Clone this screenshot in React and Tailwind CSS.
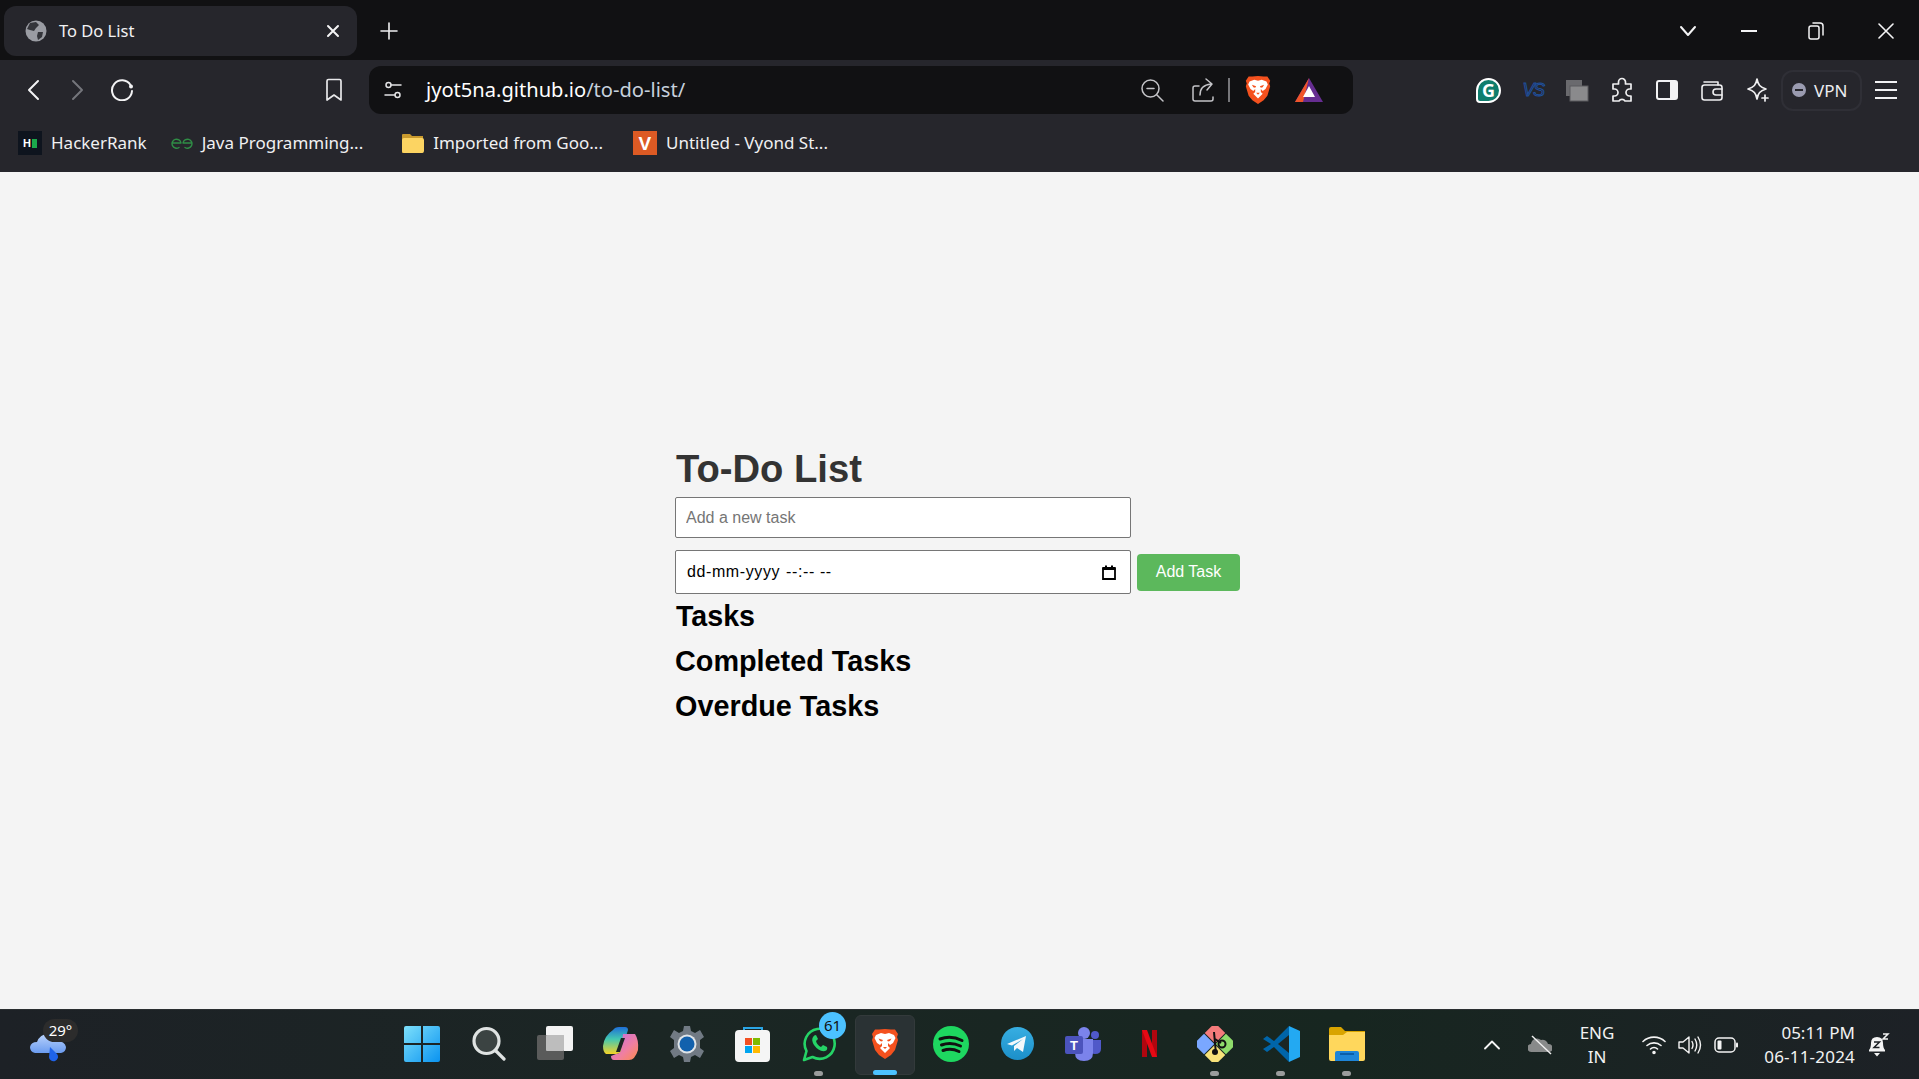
import React from "react";

const Brave = ({ s = 30 }) => (
  <svg width={s} height={s} viewBox="0 0 32 32">
    <path d="M16 1 L10 1.5 L6 1.5 L3 6 L4 9 L3 12 L6 22 L10 27 L16 31 L22 27 L26 22 L29 12 L28 9 L29 6 L26 1.5 L22 1.5 Z" fill="#f4511e" />
    <path d="M16 6 L20 5 L25 7 L26.5 10 L24 15 L21 17 L19 15 L19 18 L21 20 L16 25 L11 20 L13 18 L13 15 L11 17 L8 15 L5.5 10 L7 7 L12 5 Z" fill="#fff" />
    <path d="M9.5 10.5 L14 12 L13 13.5 L11 13 Z M22.5 10.5 L18 12 L19 13.5 L21 13 Z M14 19 L18 19 L16 21 Z" fill="#f4511e" />
  </svg>
);

const Stroke = ({ w = 24, h = 24, vb = "0 0 24 24", sw = 2, c = "#e8e8ea", children }) => (
  <svg width={w} height={h} viewBox={vb} fill="none" stroke={c} strokeWidth={sw} strokeLinecap="round" strokeLinejoin="round">
    {children}
  </svg>
);

const Cell = ({ w, children, className = "" }) => (
  <div className={`flex h-full shrink-0 items-center justify-center ${className}`} style={{ width: w }}>
    {children}
  </div>
);

function TabStrip() {
  return (
    <div className="flex h-[60px] shrink-0 items-start bg-[#111113] pl-[4px] pt-[6px]">
      <div className="flex h-[50px] w-[353px] items-center rounded-[12px] bg-[#26262c] pl-[21px]">
        <svg width="22" height="22" viewBox="0 0 22 22" className="shrink-0">
          <circle cx="11" cy="11" r="10.5" fill="#9a9ca3" />
          <path d="M5 3 L11 2 L14 5 L11 8 L9 11 L5 10 L2 9 Z M13 12 L18 12 L17 17 L13 20 L12 16 Z" fill="#34353b" />
        </svg>
        <span className="ml-[12px] text-[16.5px] leading-none text-[#f2f2f4]">To Do List</span>
        <span className="ml-auto mr-[16px] flex">
          <Stroke w={16} h={16} vb="0 0 16 16" sw={2} c="#f4f4f5"><path d="M3 3 L13 13 M13 3 L3 13" /></Stroke>
        </span>
      </div>
      <div className="ml-[23px] flex h-[50px] items-center">
        <Stroke w={18} h={18} vb="0 0 18 18" sw={1.6} c="#f0f0f2"><path d="M9 1 V17 M1 9 H17" /></Stroke>
      </div>
      <div className="ml-auto flex h-[50px] items-center">
        <Cell w={20}><Stroke w={18} h={12} vb="0 0 18 12" sw={2} c="#f4f4f5"><path d="M2 2 L9 10 L16 2" /></Stroke></Cell>
        <Cell w={40} className="ml-[31px]"><div className="h-[2px] w-[16px] bg-[#f4f4f5]" /></Cell>
        <Cell w={40} className="ml-[27px]">
          <Stroke w={16} h={18} vb="0 0 16 18" sw={1.5} c="#f4f4f5"><rect x="1" y="4" width="10" height="13" rx="2" /><path d="M5 1 H12 Q15 1 15 4 V13" /></Stroke>
        </Cell>
        <Cell w={40} className="ml-[30px] mr-[13px]"><Stroke w={16} h={16} vb="0 0 16 16" sw={1.6} c="#f4f4f5"><path d="M1 1 L15 15 M15 1 L1 15" /></Stroke></Cell>
      </div>
    </div>
  );
}

function Toolbar() {
  return (
    <div className="flex h-[68px] shrink-0 items-start bg-[#26262c] pt-[6px]">
      <div className="flex h-[48px] items-center pl-[11px]">
        <Cell w={44}><Stroke w={14} h={22} vb="0 0 14 22" sw={2} c="#f2f2f4"><path d="M12 2 L3 11 L12 20" /></Stroke></Cell>
        <Cell w={45}><Stroke w={14} h={22} vb="0 0 14 22" sw={2} c="#74757b"><path d="M2 2 L11 11 L2 20" /></Stroke></Cell>
        <Cell w={44}>
          <svg width="24" height="24" viewBox="0 0 24 24" fill="none" stroke="#f2f2f4" strokeWidth="2" strokeLinecap="round" className="-mt-[2px]">
            <path d="M20.5 8 A10 10 0 1 0 22 14" />
            <circle cx="21" cy="9.5" r="2" fill="#f2f2f4" stroke="none" />
          </svg>
        </Cell>
        <Cell w={44} className="ml-[168px]">
          <Stroke w={18} h={24} vb="0 0 18 24" sw={1.7} c="#e8e8ea"><path d="M2 3 Q2 1.5 3.5 1.5 H14.5 Q16 1.5 16 3 V22 L9 17 L2 22 Z" /></Stroke>
        </Cell>
      </div>
      <div className="ml-[13px] flex h-[48px] w-[984px] items-center rounded-[12px] bg-[#111113]">
        <span className="ml-[14px] flex">
          <Stroke w={20} h={20} vb="0 0 20 20" sw={1.5} c="#e4e4e6">
            <circle cx="5.5" cy="5" r="2.5" /><path d="M8 5 H18 M2 15 H12" /><circle cx="14.5" cy="15" r="2.5" />
          </Stroke>
        </span>
        <span className="ml-[23px] text-[20.1px] leading-none">
          <span className="text-[#ffffff]">jyot5na.github.io</span>
          <span className="text-[#c6d0dc]">/to-do-list/</span>
        </span>
        <div className="ml-auto flex h-full items-center pr-[30px]">
          <Stroke w={24} h={24} sw={1.5} c="#c4c4c8"><circle cx="10.5" cy="10.5" r="8.5" /><path d="M17 17 L23 23" /><path d="M7 10.5 H14" /></Stroke>
          <span className="ml-[27px] flex">
            <Stroke w={24} h={26} vb="0 0 24 26" sw={1.5} c="#c4c4c8"><path d="M8 9 H4 Q2 9 2 11 V22 Q2 24 4 24 H20 Q22 24 22 22 V20" /><path d="M9 18 Q9 8 20 7 M15 2 L21 7 L16 13" /></Stroke>
          </span>
          <div className="ml-[13px] h-[24px] w-[2px] bg-[#77777b]" />
          <span className="ml-[13px] flex"><Brave s={30} /></span>
          <svg width="28" height="24" viewBox="0 0 28 24" className="ml-[22px]">
            <path d="M14 0 L28 24 H0 Z" fill="#662d91" />
            <path d="M14 0 L0 24 H8 Z" fill="#f0542a" />
            <path d="M14 8 L20 19 H8 Z" fill="#fff" />
          </svg>
        </div>
      </div>
      <div className="flex h-[48px] items-center">
        <span className="ml-[123px] flex h-[25px] w-[25px] items-center justify-center rounded-[50%_50%_50%_4px] border-2 border-white bg-[#0f7d6d] text-[18px] font-bold leading-none text-white">G</span>
        <span className="ml-[20px] w-[24px] text-center font-['Liberation_Sans',sans-serif] text-[18px] italic leading-none tracking-[-1.5px] text-transparent [-webkit-text-stroke:1px_#1f4f9c]">VS</span>
        <svg width="24" height="24" viewBox="0 0 24 24" className="ml-[20px]">
          <rect x="1" y="2" width="16" height="16" fill="#6a6a6e" />
          <rect x="5" y="8" width="18" height="15" fill="#8a8a8c" stroke="#5a5a5e" />
        </svg>
        <span className="ml-[21px] flex">
          <Stroke w={24} h={26} vb="0 0 24 26" sw={1.7} c="#efeff1"><path d="M8.5 5 A3.5 3.5 0 0 1 15.5 5 L15.5 7 H21 V12 H19.5 A3.5 3.5 0 0 0 19.5 19 H21 V24 H15 A3.5 3.5 0 0 0 9 24 H3 V19 H4.5 A3.5 3.5 0 0 0 4.5 12 H3 V7 H8.5 Z" /></Stroke>
        </span>
        <svg width="24" height="24" viewBox="0 0 24 24" className="ml-[21px]">
          <rect x="2" y="3" width="20" height="18" rx="2" fill="none" stroke="#f2f2f4" strokeWidth="2" />
          <rect x="15" y="3" width="7" height="18" fill="#f2f2f4" />
        </svg>
        <span className="ml-[21px] flex">
          <Stroke w={24} h={24} sw={1.6} c="#efeff1"><path d="M4 4 H18 V7" /><rect x="2" y="7" width="20" height="15" rx="2.5" /><path d="M22 11 H16 A2.5 2.5 0 0 0 16 17 H22" /></Stroke>
        </span>
        <span className="ml-[21px] flex">
          <Stroke w={24} h={26} vb="0 0 24 26" sw={1.7} c="#efeff1"><path d="M12 2 C13 8 15 10 21 12 C15 14 13 16 12 22 C11 16 9 14 3 12 C9 10 11 8 12 2 Z" /><path d="M20 18 V24 M17 21 H23" /></Stroke>
        </span>
        <div className="ml-[12px] flex h-[41px] w-[81px] items-center rounded-[12px] border-2 border-[#2f2f36] pl-[9px]">
          <span className="flex h-[14px] w-[14px] items-center justify-center rounded-full bg-[#9a9bb0]"><span className="h-[2px] w-[8px] bg-[#26262c]" /></span>
          <span className="ml-[8px] text-[17px] leading-none text-[#ededf0]">VPN</span>
        </div>
        <div className="ml-[13px] flex w-[22px] flex-col gap-[6px]">
          <div className="h-[2px] bg-[#f2f2f4]" /><div className="h-[2px] bg-[#f2f2f4]" /><div className="h-[2px] bg-[#f2f2f4]" />
        </div>
      </div>
    </div>
  );
}

const Bookmark = ({ icon, label, ml }) => (
  <div className="flex h-[24px] items-center" style={{ marginLeft: ml }}>
    {icon}
    <span className="-mt-[2px] ml-[9px] whitespace-nowrap text-[17px] leading-none text-[#f0f0f2]">{label}</span>
  </div>
);

function Bookmarks() {
  return (
    <div className="flex h-[44px] shrink-0 items-start bg-[#26262c] pl-[18px] pt-[3px]">
      <Bookmark ml={0} label="HackerRank" icon={
        <span className="flex h-[24px] w-[24px] items-center justify-center gap-[1px] bg-[#0e141e]">
          <span className="font-['Liberation_Sans',sans-serif] text-[11px] font-bold leading-none text-white">H</span>
          <span className="h-[9px] w-[5px] bg-[#1ba94c]" />
        </span>} />
      <Bookmark ml={24} label="Java Programming..." icon={
        <Stroke w={22} h={14} vb="0 0 22 14" sw={1.4} c="#2f8d46">
          <path d="M1 7 H10 A4.5 4.5 0 1 0 8 11.5 M21 7 H12 A4.5 4.5 0 1 1 14 11.5" />
        </Stroke>} />
      <Bookmark ml={38} label="Imported from Goo..." icon={
        <svg width="23" height="24" viewBox="0 0 23 24">
          <path d="M1 4 Q1 3 2 3 H9 L11 5 H22 V21 Q22 22 21 22 H2 Q1 22 1 21 Z" fill="#c99a2e" />
          <rect x="1" y="7" width="22" height="15" rx="2" fill="#fcd462" />
        </svg>} />
      <Bookmark ml={30} label="Untitled - Vyond St..." icon={
        <span className="flex h-[24px] w-[24px] items-center justify-center bg-[#dc5a24] font-['Liberation_Sans',sans-serif] text-[19px] font-bold leading-none text-white">V</span>} />
    </div>
  );
}

function Page() {
  return (
    <main className="flex min-h-0 flex-1 flex-col bg-[#f4f4f4] pl-[675px] pt-[275px] font-['Liberation_Sans',Arial,sans-serif]">
      <h1 className="pl-[1px] text-[38.2px] font-bold leading-[43px] text-[#333333]">To-Do List</h1>
      <input
        readOnly
        placeholder="Add a new task"
        className="mt-[7px] h-[41px] w-[456px] rounded-[2px] border border-[#767676] bg-white px-[10px] text-[16px] outline-none placeholder:text-[#757575]"
      />
      <div className="mt-[12px] flex items-center gap-[6px]">
        <div className="flex h-[44px] w-[456px] items-center rounded-[2px] border border-[#767676] bg-white pl-[11px] pr-[14px] text-[16px] text-black">
          <span className="tracking-[0.6px]">dd-mm-yyyy</span>
          <span className="ml-[6px] tracking-[0.6px]">--:-- --</span>
          <svg width="14" height="15" viewBox="0 0 14 15" className="ml-auto">
            <path d="M1 3.5 H13 V14 H1 Z" fill="none" stroke="#000" strokeWidth="1.8" />
            <rect x="0.5" y="2" width="13" height="3" fill="#000" />
            <rect x="3" y="0.5" width="2" height="3" fill="#000" />
            <rect x="9" y="0.5" width="2" height="3" fill="#000" />
          </svg>
        </div>
        <button className="h-[37px] w-[103px] rounded-[4px] bg-[#5cb85c] text-[16px] text-white">Add Task</button>
      </div>
      <h2 className="mt-[6px] pl-[1px] text-[28.6px] font-bold leading-[32px] text-black">Tasks</h2>
      <h2 className="mt-[13px] text-[28.8px] font-bold leading-[32px] text-black">Completed Tasks</h2>
      <h2 className="mt-[13px] text-[28.8px] font-bold leading-[32px] text-black">Overdue Tasks</h2>
    </main>
  );
}

const Slot = ({ children, dot, active }) => (
  <div className="relative flex h-full w-[66px] shrink-0 items-center justify-center pb-[2px]">
    {active && <div className="absolute left-[3px] top-[5px] h-[60px] w-[60px] rounded-[6px] border border-[#333a3b] bg-[#2a3234]" />}
    <div className="relative flex">{children}</div>
    {dot && <div className="absolute bottom-[3px] left-[28px] h-[5px] w-[9px] rounded-full bg-[#9a9c9c]" />}
    {active && <div className="absolute bottom-[4px] left-[21px] h-[5px] w-[24px] rounded-full bg-[#4cc2ff]" />}
  </div>
);

function Taskbar() {
  return (
    <footer className="flex h-[70px] shrink-0 items-center border-t border-[#2a2e30] bg-[linear-gradient(90deg,#1d2126_0%,#1b2624_35%,#172620_70%,#1d2126_100%)] font-['Noto_Sans',sans-serif] text-[#f2f2f2]">
      <div className="relative h-full w-[390px] shrink-0">
        <svg width="36" height="29" viewBox="0 0 36 29" className="absolute left-[30px] top-[23px]">
          <defs>
            <linearGradient id="cl" x1="0" y1="0" x2="0" y2="1"><stop offset="0" stopColor="#b9d2fb" /><stop offset="1" stopColor="#6b9cf0" /></linearGradient>
          </defs>
          <path d="M5 20 Q0 19 0 14 Q1 9 7 9 Q10 1 18 1 Q24 2 26 8 Q35 8 36 14 Q36 19 31 20 Z" fill="url(#cl)" />
          <path d="M20 14 L27 21 A4.5 4.5 0 1 1 19 24 Z" fill="#1f63ea" />
        </svg>
        <span className="absolute left-[43px] top-[9px] flex h-[23px] w-[35px] items-center justify-center rounded-full bg-[#2c2c2c] text-[15px] leading-none text-white">29°</span>
      </div>

      <Slot>
        <svg width="36" height="36" viewBox="0 0 36 36" className="-ml-[3px]">
          <defs><linearGradient id="w" x1="0" y1="0" x2="1" y2="1"><stop offset="0" stopColor="#7de0fb" /><stop offset="1" stopColor="#0a93f0" /></linearGradient></defs>
          <path d="M0 2 Q0 0 2 0 H17 V17 H0 Z M19 0 H34 Q36 0 36 2 V17 H19 Z M0 19 H17 V36 H2 Q0 36 0 34 Z M19 19 H36 V34 Q36 36 34 36 H19 Z" fill="url(#w)" />
        </svg>
      </Slot>
      <Slot>
        <Stroke w={34} h={36} vb="0 0 34 36" sw={3.2} c="#dfe3e2"><circle cx="14.5" cy="15" r="12.5" fill="#3b4342" /><path d="M24 25 L32 33" /></Stroke>
      </Slot>
      <Slot>
        <svg width="36" height="36" viewBox="0 0 36 36">
          <rect x="9" y="0" width="27" height="25" rx="2" fill="#f3f3f3" />
          <rect x="0" y="9" width="27" height="25" rx="2" fill="#5f6060" fillOpacity="0.92" />
          <rect x="9" y="9" width="18" height="16" rx="1" fill="#bdbdbd" />
        </svg>
      </Slot>
      <Slot>
        <svg width="36" height="36" viewBox="0 0 36 36">
          <defs>
            <linearGradient id="c1" x1="0" y1="0" x2="0" y2="1"><stop offset="0" stopColor="#1f6fd8" /><stop offset="0.45" stopColor="#43c8b0" /><stop offset="1" stopColor="#f5d327" /></linearGradient>
            <linearGradient id="c2" x1="0" y1="0" x2="1" y2="1"><stop offset="0" stopColor="#c16be8" /><stop offset="0.6" stopColor="#f07fa0" /><stop offset="1" stopColor="#fb8b4a" /></linearGradient>
          </defs>
          <path d="M10 4 Q12 1 16 1 H22 Q25 1 25 4 L18 26 Q16 28 13 28 L3 28 Q0 26 0 20 Q1 10 10 4 Z" fill="url(#c1)" />
          <path d="M20 8 H32 Q36 14 35 24 Q32 34 26 34 H11 Q8 34 8 30 L13 28 Q17 28 18 24 Z" fill="url(#c2)" />
          <path d="M18 12 L22 12 L17 26 L13 26 Z" fill="#1b2624" />
        </svg>
      </Slot>
      <Slot>
        <svg width="36" height="36" viewBox="0 0 36 36">
          <path d="M15 0 H21 L22 5 L26 7 L31 4 L35 11 L31 14 V22 L35 25 L31 32 L26 29 L22 31 L21 36 H15 L14 31 L10 29 L5 32 L1 25 L5 22 V14 L1 11 L5 4 L10 7 L14 5 Z" fill="#717a84" />
          <circle cx="18" cy="18" r="9.5" fill="#dfe4e8" />
          <circle cx="18" cy="18" r="7.5" fill="#1261ad" />
        </svg>
      </Slot>
      <Slot>
        <svg width="36" height="36" viewBox="0 0 36 36">
          <path d="M9 8 V2 H27 V8" fill="none" stroke="#2aa5e5" strokeWidth="2" />
          <rect x="0" y="4" width="35" height="32" rx="4" fill="#f5f5f5" />
          <rect x="10" y="12" width="7" height="7" fill="#f25022" />
          <rect x="18" y="12" width="7" height="7" fill="#7fba00" />
          <rect x="10" y="20" width="7" height="7" fill="#00a4ef" />
          <rect x="18" y="20" width="7" height="7" fill="#ffb900" />
        </svg>
      </Slot>
      <Slot dot>
        <svg width="36" height="36" viewBox="0 0 36 36" fill="none">
          <path d="M3 34 L5.5 25 A15 15 0 1 1 11.5 31 Z" stroke="#25d366" strokeWidth="2.6" strokeLinejoin="round" />
          <path d="M12 11 Q10 14 13 19 Q18 26 24 25 Q27 24 26 21 L22 19 L20 21 Q16 19 15 15 L17 13 L15 9 Q13 9 12 11 Z" fill="#25d366" />
        </svg>
        <span className="absolute left-[18px] top-[-14px] flex h-[27px] w-[27px] items-center justify-center rounded-full bg-[#4cc2ff] text-[15px] leading-none text-[#111]">61</span>
      </Slot>
      <Slot active>
        <Brave s={32} />
      </Slot>
      <Slot>
        <svg width="36" height="36" viewBox="0 0 36 36" fill="none">
          <circle cx="18" cy="18" r="18" fill="#1ed760" />
          <path d="M7 13 Q18 9 29 14.5 M8.5 19 Q18 15.5 27.5 20 M10 24.5 Q18 21.5 26 25.5" stroke="#111" strokeWidth="3" strokeLinecap="round" />
        </svg>
      </Slot>
      <Slot>
        <svg width="33" height="33" viewBox="0 0 33 33">
          <defs><linearGradient id="t" x1="0" y1="0" x2="0" y2="1"><stop offset="0" stopColor="#37aee2" /><stop offset="1" stopColor="#1c8fc9" /></linearGradient></defs>
          <circle cx="16.5" cy="16.5" r="16.5" fill="url(#t)" />
          <path d="M6 17 L25 9 L22 25 L16 21 L13 24 L13 19 L22 12 L11 18.5 Z" fill="#f3f8fb" />
        </svg>
      </Slot>
      <Slot>
        <svg width="36" height="34" viewBox="0 0 36 34">
          <circle cx="19" cy="6" r="6" fill="#7b83eb" />
          <circle cx="30" cy="8" r="4" fill="#5059c9" />
          <path d="M24 13 H36 V22 Q36 27 30 27 Q26 27 24 24 Z" fill="#5059c9" />
          <path d="M10 12 H28 V26 Q28 34 19 34 Q10 34 10 26 Z" fill="#7b83eb" />
          <rect x="0" y="9" width="18" height="18" rx="2" fill="#4b53bc" />
          <text x="9" y="23" textAnchor="middle" fontSize="13" fontWeight="700" fill="#fff" fontFamily="Liberation Sans">T</text>
        </svg>
      </Slot>
      <Slot>
        <svg width="15" height="27" viewBox="0 0 15 27">
          <rect x="0" y="0" width="5" height="27" fill="#b1060f" />
          <rect x="10" y="0" width="5" height="27" fill="#b1060f" />
          <polygon points="0,0 5,0 15,27 10,27" fill="#e50914" />
        </svg>
      </Slot>
      <Slot dot>
        <svg width="36" height="36" viewBox="0 0 36 36">
          <g transform="rotate(45 18 18)">
            <rect x="3" y="3" width="14.5" height="14.5" fill="#f47b7b" />
            <rect x="18.5" y="3" width="14.5" height="14.5" fill="#8fdc6b" />
            <rect x="3" y="18.5" width="14.5" height="14.5" fill="#7aa7ff" />
            <rect x="18.5" y="18.5" width="14.5" height="14.5" fill="#f8e27a" />
          </g>
          <path d="M17 6 L19 28" stroke="#111" strokeWidth="2" />
          <circle cx="25" cy="18" r="3.5" fill="none" stroke="#111" strokeWidth="2" />
          <circle cx="18" cy="26" r="3" fill="#111" />
          <path d="M18 13 L24 17" stroke="#111" strokeWidth="2" />
        </svg>
      </Slot>
      <Slot dot>
        <svg width="37" height="36" viewBox="0 0 37 36">
          <path d="M26 0 V36 L11 21 L4 26 L0 23 L8 18 L0 13 L4 10 L11 15 Z" fill="#0065a9" />
          <path d="M26 9 L15 18 L26 27 Z" fill="#1b2624" />
          <path d="M26 0 L37 5 V31 L26 36 Z" fill="#23a9f2" />
        </svg>
      </Slot>
      <Slot dot>
        <svg width="36" height="34" viewBox="0 0 36 34">
          <path d="M0 2 Q0 0 2 0 H12 L16 4 H36 V32 H0 Z" fill="#d9a400" />
          <path d="M0 8 H14 L18 5 H36 V32 Q36 34 34 34 H2 Q0 34 0 32 Z" fill="#ffd75c" />
          <path d="M6 34 V26 Q6 24 8 24 H28 Q30 24 30 26 V34 Z" fill="#1e85d8" />
          <rect x="11" y="26" width="14" height="2" fill="#0c5ea8" />
        </svg>
      </Slot>

      <div className="ml-auto flex h-full items-center pr-[29px]">
        <Stroke w={16} h={10} vb="0 0 16 10" sw={1.8} c="#f4f4f4"><path d="M1 8.5 L8 1.5 L15 8.5" /></Stroke>
        <svg width="24" height="20" viewBox="0 0 24 20" className="ml-[28px]">
          <path d="M4 17 A4 4 0 0 1 3 9 A6 6 0 0 1 13 5 A5.5 5.5 0 0 1 20 9 A4 4 0 0 1 21 17 Z" fill="#888a8a" />
          <path d="M4 1 L23 19" stroke="#f0f0f0" strokeWidth="1.4" />
        </svg>
        <div className="ml-[25px] flex w-[40px] flex-col items-center text-[17px] leading-[24px]">
          <span>ENG</span><span>IN</span>
        </div>
        <span className="ml-[25px] flex">
          <Stroke w={24} h={20} vb="0 0 24 20" sw={1.6} c="#f4f4f4"><path d="M1 6.5 A16 16 0 0 1 23 6.5 M5 10.5 A10.5 10.5 0 0 1 19 10.5 M8.5 14 A5 5 0 0 1 15.5 14" /><circle cx="12" cy="17.5" r="1" fill="#f4f4f4" /></Stroke>
        </span>
        <span className="ml-[12px] flex">
          <Stroke w={24} h={20} vb="0 0 24 20" sw={1.4} c="#f4f4f4"><path d="M1 7 H5 L11 2 V18 L5 13 H1 Z" /><path d="M14 6.5 Q16 10 14 13.5 M17 4 Q20.5 10 17 16 M20 2 Q25 10 20 18" /></Stroke>
        </span>
        <svg width="24" height="16" viewBox="0 0 24 16" className="ml-[12px]">
          <rect x="1" y="1" width="20" height="14" rx="4" fill="none" stroke="#f4f4f4" strokeWidth="1.5" />
          <rect x="3.5" y="3.5" width="4" height="9" rx="1" fill="#f4f4f4" />
          <rect x="22" y="5.5" width="2" height="5" rx="1" fill="#f4f4f4" />
        </svg>
        <div className="ml-[20px] flex w-[97px] flex-col items-end text-[17px] leading-[24px]">
          <span>05:11 PM</span><span className="tracking-[0.2px]">06-11-2024</span>
        </div>
        <svg width="22" height="26" viewBox="0 0 22 26" className="ml-[13px]">
          <path d="M1 18 Q3 16 3 11 Q3 5 9 5 Q15 5 15 11 Q15 16 17 18 V19.5 H1 Z" fill="#f4f4f4" />
          <path d="M6 21 H12 L9 24.5 Z" fill="#f4f4f4" />
          <path d="M6 10 H11.5 L6 15.5 H11.5" fill="none" stroke="#1d2126" strokeWidth="1.5" />
          <path d="M15 2 H20 L15 7 H20" fill="none" stroke="#f4f4f4" strokeWidth="1.5" />
        </svg>
      </div>
    </footer>
  );
}

export default function App() {
  return (
    <div className="flex h-screen flex-col overflow-hidden font-['Noto_Sans',sans-serif]">
      <TabStrip />
      <Toolbar />
      <Bookmarks />
      <Page />
      <Taskbar />
    </div>
  );
}
